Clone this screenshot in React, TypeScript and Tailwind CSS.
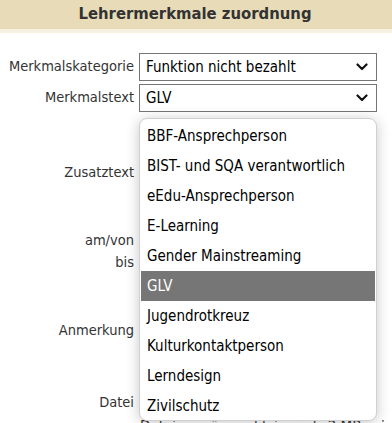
import React from "react";

const options = [
  "BBF-Ansprechperson",
  "BIST- und SQA verantwortlich",
  "eEdu-Ansprechperson",
  "E-Learning",
  "Gender Mainstreaming",
  "GLV",
  "Jugendrotkreuz",
  "Kulturkontaktperson",
  "Lerndesign",
  "Zivilschutz",
];

const Chevron = () => (
  <svg width="12" height="8" viewBox="0 0 12 8" className="shrink-0">
    <polyline
      points="1.5,1.5 6,6 10.5,1.5"
      fill="none"
      stroke="#111"
      strokeWidth="2.2"
      strokeLinecap="round"
      strokeLinejoin="round"
    />
  </svg>
);

const FakeSelect = ({ value }: { value: string }) => (
  <div className="w-[238px] h-[28px] border border-[#767676] bg-white flex items-center justify-between pl-[6px] pr-[8px] text-[15px] text-black">
    <span>{value}</span>
    <Chevron />
  </div>
);

const Label = ({ text }: { text: string }) => (
  <div className="w-[135px] shrink-0 text-right pr-[1px] text-[14.5px] text-[#333]">
    {text}
  </div>
);

const App = () => {
  return (
    <div
      className="w-[392px] h-[423px] overflow-hidden bg-white relative"
      style={{ fontFamily: '"DejaVu Sans Condensed", "Liberation Sans", Arial, sans-serif' }}
    >
      <div className="h-[29px] bg-[#e8dcb8] flex items-center justify-center">
        <h1 className="text-[16.5px] font-bold text-[#333] pr-[2px]">
          Lehrermerkmale zuordnung
        </h1>
      </div>
      <div className="h-[4px] bg-[#f6f1e0]"></div>

      <div className="pt-[20px] flex flex-col">
        <div className="flex items-center gap-[4px] h-[28px]">
          <Label text="Merkmalskategorie" />
          <FakeSelect value="Funktion nicht bezahlt" />
        </div>
        <div className="flex items-center gap-[4px] h-[28px] mt-[3px]">
          <Label text="Merkmalstext" />
          <FakeSelect value="GLV" />
        </div>

        <div className="flex items-center h-[108px] mt-[7px]">
          <Label text="Zusatztext" />
        </div>
        <div className="flex items-center h-[22px] mt-[3px]">
          <Label text="am/von" />
        </div>
        <div className="flex items-center h-[22px]">
          <Label text="bis" />
        </div>
        <div className="flex items-center h-[108px] mt-[3px]">
          <Label text="Anmerkung" />
        </div>
        <div className="flex items-center h-[28px] mt-[4px]">
          <Label text="Datei" />
        </div>
        <div className="pl-[140px] text-[15px] text-[#333] whitespace-nowrap -mt-[1px]">
          Dateien müssen kleiner als 2 MB sein, eine Datei
        </div>
      </div>

      {/* open option list */}
      <div className="absolute left-[139px] top-[118px] w-[238px] h-[303px] bg-white border border-[#d0d0d0] rounded-[8px] shadow-[0_2px_14px_rgba(0,0,0,0.22)] pt-[2px] px-[1px] overflow-hidden">
        {options.map((opt) => (
          <div
            key={opt}
            className={
              opt === "GLV"
                ? "h-[30px] flex items-center pl-[6px] text-[15px] bg-[#767676] text-white"
                : "h-[30px] flex items-center pl-[6px] text-[15px] text-black"
            }
          >
            {opt}
          </div>
        ))}
      </div>
    </div>
  );
};

export default App;
